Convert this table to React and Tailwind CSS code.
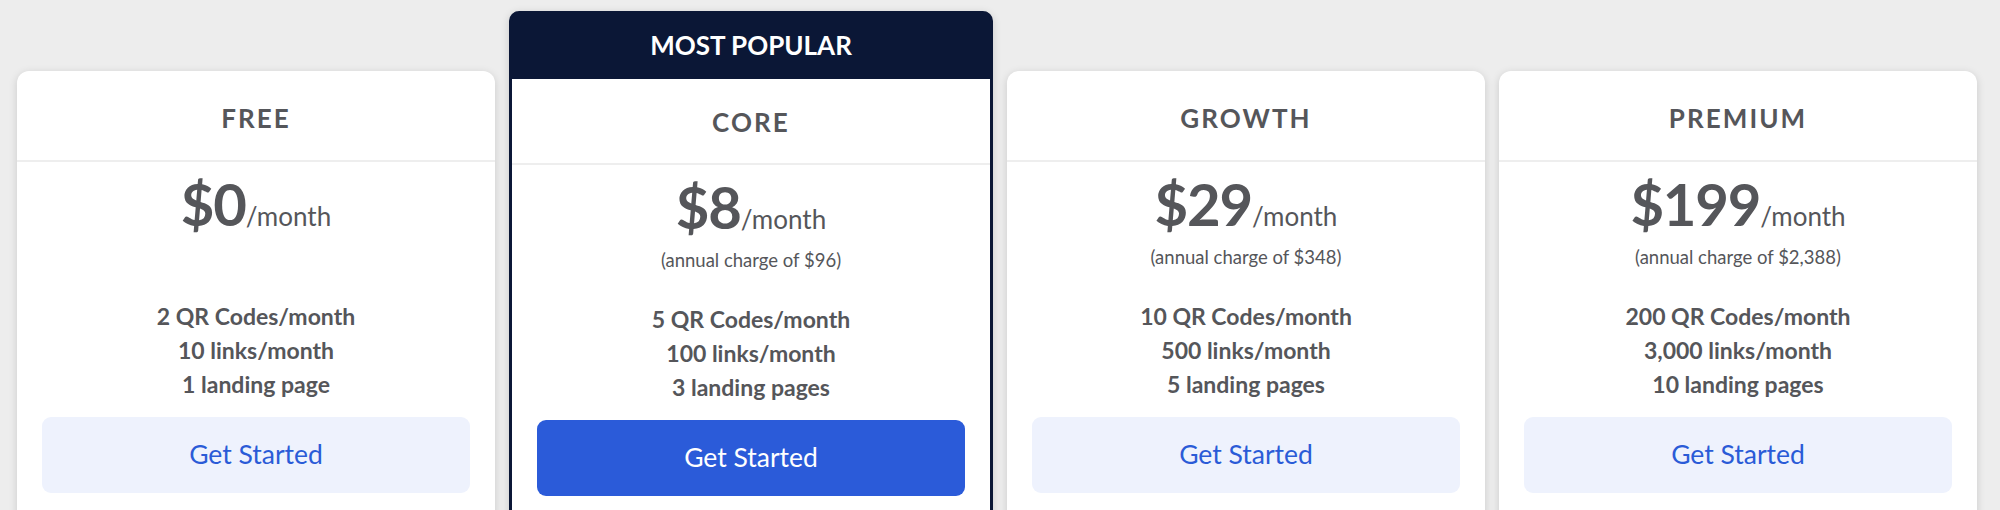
import React from 'react'

const plans = [
    { name: "FREE", price: "$0", annual: null, features: ["2 QR Codes/month", "10 links/month", "1 landing page"] },
    { name: "CORE", price: "$8", annual: "(annual charge of $96)", features: ["5 QR Codes/month", "100 links/month", "3 landing pages"], popular: true },
    { name: "GROWTH", price: "$29", annual: "(annual charge of $348)", features: ["10 QR Codes/month", "500 links/month", "5 landing pages"] },
    { name: "PREMIUM", price: "$199", annual: "(annual charge of $2,388)", features: ["200 QR Codes/month", "3,000 links/month", "10 landing pages"] },
];

const PlanBody = ({ plan }) => (
    <div className="flex flex-col px-[25px]">
        <div className="mt-[13px] flex items-baseline justify-center leading-none text-[#55565a]">
            <span className="text-[58px] font-bold tracking-[-0.02em]">{plan.price}</span>
            <span className="text-[26px]">/month</span>
        </div>
        <div className="h-[35px] pt-[13px] text-center text-[18.5px] leading-[22px] text-[#55565a]">{plan.annual}</div>
        <ul className="mt-[31px] flex flex-col text-center text-[23px] font-bold leading-[34px] text-[#55565a]">
            {plan.features.map((f) => (
                <li key={f}>{f}</li>
            ))}
        </ul>
        <button
            className={
                plan.popular
                    ? "mt-[16px] h-[76px] rounded-[9px] bg-[#2b5bd9] text-[26.5px] text-white"
                    : "mt-[16px] h-[76px] rounded-[9px] bg-[#eef2fd] text-[26.5px] text-[#2a5bd7]"
            }
        >
            Get Started
        </button>
    </div>
);

const App = () => {
    return (
        <div className="h-[510px] overflow-hidden bg-[#ededed] font-['Lato',sans-serif]">
            <div className="flex items-start gap-[14px] pl-[17px]">
                {plans.map((plan) =>
                    plan.popular ? (
                        <div key={plan.name} className="mt-[11px] h-[520px] w-[484px] shrink-0 overflow-hidden rounded-t-[10px] border-x-[3px] border-[#0b1736] bg-[#0b1736] shadow-[0_2px_8px_rgba(0,0,0,0.15)]">
                            <div className="flex h-[68px] items-center justify-center text-[26px] font-bold text-white">MOST POPULAR</div>
                            <div className="h-full bg-white">
                                <div className="flex h-[86px] items-center justify-center border-b-2 border-[#eeeeee] pt-[2px] text-[26px] font-bold tracking-[0.08em] text-[#55565a]">
                                    {plan.name}
                                </div>
                                <PlanBody plan={plan} />
                            </div>
                        </div>
                    ) : (
                        <div key={plan.name} className="mt-[71px] h-[520px] w-[478px] shrink-0 rounded-[12px] bg-white shadow-[0_2px_8px_rgba(0,0,0,0.15)]">
                            <div className="flex h-[91px] items-center justify-center border-b-2 border-[#eeeeee] pt-[6px] text-[26px] font-bold tracking-[0.08em] text-[#55565a]">
                                {plan.name}
                            </div>
                            <PlanBody plan={plan} />
                        </div>
                    )
                )}
            </div>
        </div>
    );
};

export default App
